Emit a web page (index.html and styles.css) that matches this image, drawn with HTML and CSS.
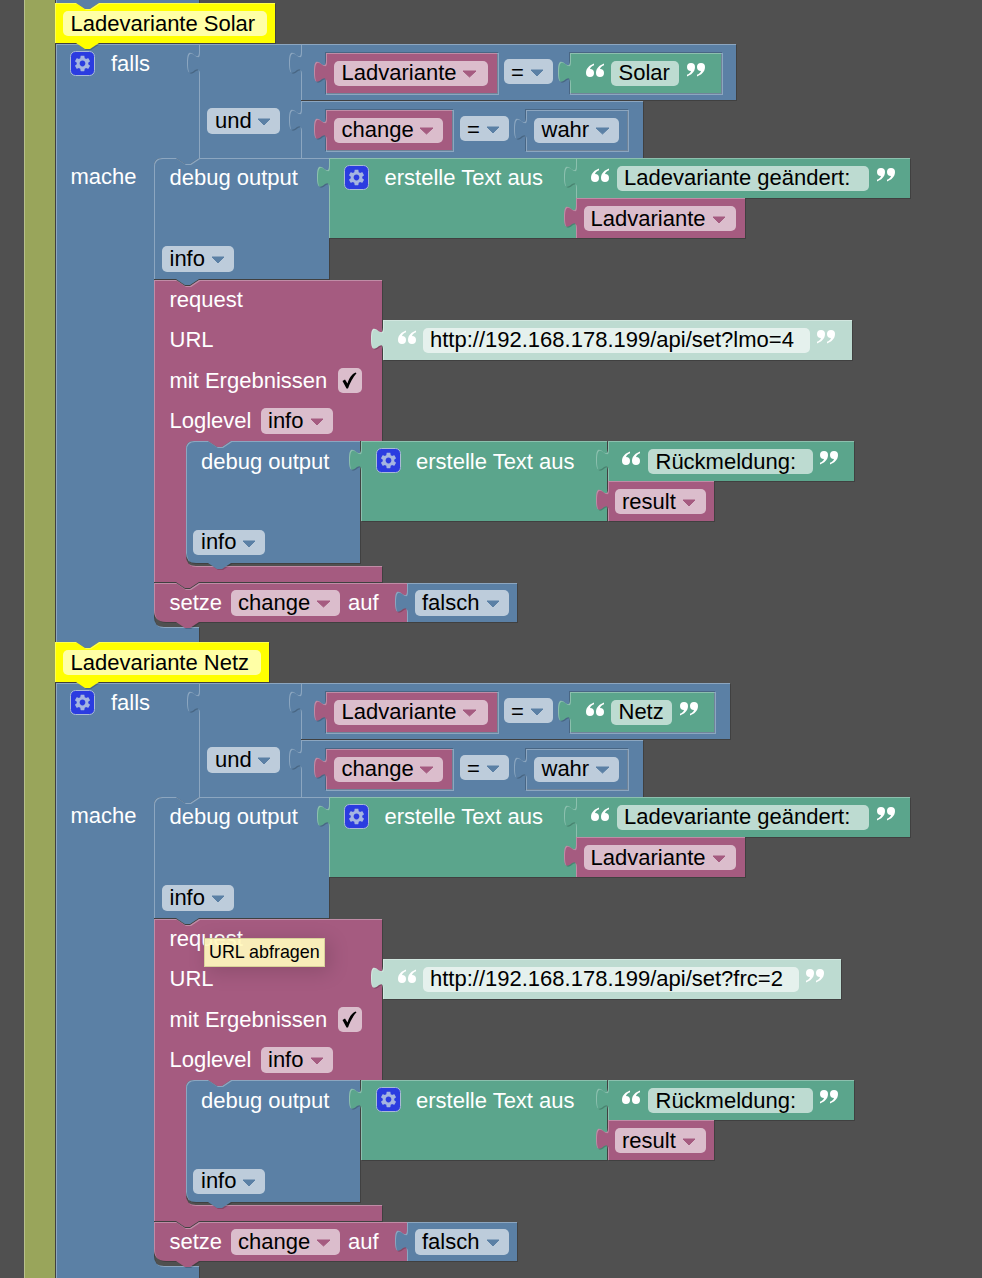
FILE: index.html
```html
<!DOCTYPE html>
<html lang="de">
<head>
    <meta charset="UTF-8">
    <title>Ladevariante</title>
    <link rel="stylesheet" href="styles.css">
</head>
<body>
<div class="workspace">
<svg class="canvas" width="982" height="1278" viewBox="0 0 982 1278">
    <defs>
        <filter id="bevel" x="-5%" y="-5%" width="110%" height="110%" color-interpolation-filters="sRGB">
            <feOffset in="SourceAlpha" dx="1" dy="1" result="off"/>
            <feComposite in="SourceAlpha" in2="off" operator="out" result="edge"/>
            <feFlood flood-color="#fff" flood-opacity=".3"/>
            <feComposite in2="edge" operator="in" result="light"/>
            <feFlood flood-color="#000" flood-opacity=".2"/>
            <feComposite in2="off" operator="in" result="dark"/>
            <feMerge>
                <feMergeNode in="dark"/>
                <feMergeNode in="SourceGraphic"/>
                <feMergeNode in="light"/>
            </feMerge>
        </filter>

        <symbol id="gear" viewBox="0 0 25 25">
            <rect class="gear-box" x=".5" y=".5" width="24" height="24" rx="5"/>
            <path class="gear-wheel" transform="translate(2.9 2.9) scale(.8)" d="M19.14 12.94c.04-.3.06-.61.06-.94 0-.32-.02-.64-.07-.94l2.03-1.58c.18-.14.23-.41.12-.61l-1.92-3.32c-.12-.22-.37-.29-.59-.22l-2.39.96c-.5-.38-1.03-.7-1.62-.94l-.36-2.54c-.04-.24-.24-.41-.48-.41h-3.84c-.24 0-.43.17-.47.41l-.36 2.54c-.59.24-1.13.57-1.62.94l-2.39-.96c-.22-.08-.47 0-.59.22L2.74 8.87c-.12.21-.08.47.12.61l2.03 1.58c-.05.3-.09.63-.09.94s.02.64.07.94l-2.03 1.58c-.18.14-.23.41-.12.61l1.92 3.32c.12.22.37.29.59.22l2.39-.96c.5.38 1.03.7 1.62.94l.36 2.54c.05.24.24.41.48.41h3.84c.24 0 .44-.17.47-.41l.36-2.54c.59-.24 1.13-.56 1.62-.94l2.39.96c.22.08.47 0 .59-.22l1.92-3.32c.12-.22.07-.47-.12-.61l-2.01-1.58zM12 15.6c-1.98 0-3.6-1.62-3.6-3.6s1.62-3.6 3.6-3.6 3.6 1.62 3.6 3.6-1.62 3.6-3.6 3.6z"/>
        </symbol>
        <symbol id="quote-open" viewBox="0 0 18 14">
            <path class="quote" d="M8 .5C4 2 0 5 0 10a4 4 0 1 0 4-4C4.300 4.500 5.500 3.300 8 2.300zM18 .5C14 2 10 5 10 10a4 4 0 1 0 4-4C14.300 4.500 15.500 3.300 18 2.300z"/>
        </symbol>
        <symbol id="quote-close" viewBox="0 0 18 14">
            <path class="quote" transform="rotate(180 9 7)" d="M8 .5C4 2 0 5 0 10a4 4 0 1 0 4-4C4.300 4.500 5.500 3.300 8 2.300zM18 .5C14 2 10 5 10 10a4 4 0 1 0 4-4C14.300 4.500 15.500 3.300 18 2.300z"/>
        </symbol>

        <!-- falls / und, liegen unter allem anderen -->
        <g id="base">
            <path class="blk blue" d="M56 44H199V158H199l-9 6h-5l-9-6H162Q154 158 154 166V617Q154 627 164 627H199V642H99l-9 6h-5l-9-6H56z"/>
            <path class="blk blue" d="M199 44H301V158H199V74c0-15-12 12-12-11.250s12 3.750 12-11.250z"/>
        </g>

        <!-- alle Bloecke die in beiden Stapeln gleich sind -->
        <g id="blocks">
            <rect class="slot slot-blue" x="326" y="53" width="173" height="42"/>
            <path class="blk purple" d="M326 53H497V93H326V83c0-15-12 12-12-11.250s12 3.750 12-11.250z"/>
            <rect class="field f-purple" x="334" y="61" width="154" height="25" rx="5"/>
            <path class="arrow a-purple" d="M463 71h13l-6.500 6z"/>
            <rect class="field f-blue" x="504" y="59" width="49" height="25" rx="5"/>
            <path class="arrow a-blue" d="M531 70h12l-6 6z"/>

            <path class="blk blue" d="M301 101H643V158H301V131c0-15-12 12-12-11.250s12 3.750 12-11.250z"/>
            <rect class="slot slot-blue" x="326" y="110" width="128" height="42"/>
            <path class="blk purple" d="M326 110H452V150H326V140c0-15-12 12-12-11.250s12 3.750 12-11.250z"/>
            <rect class="field f-purple" x="334" y="118" width="109" height="25" rx="5"/>
            <path class="arrow a-purple" d="M420 128h13l-6.500 6z"/>
            <rect class="field f-blue" x="460" y="116" width="49" height="25" rx="5"/>
            <path class="arrow a-blue" d="M487 127h12l-6 6z"/>
            <rect class="slot slot-blue" x="526" y="110" width="103" height="42"/>
            <path class="blk blue" d="M526 110H627V150H526V140c0-15-12 12-12-11.250s12 3.750 12-11.250z"/>
            <rect class="field f-blue" x="534" y="118" width="85" height="25" rx="5"/>
            <path class="arrow a-blue" d="M596 128h13l-6.500 6z"/>

            <rect class="field f-blue" x="207" y="108" width="73" height="26" rx="5"/>
            <path class="arrow a-blue" d="M258 119h12l-6 6z"/>
            <use href="#gear" x="70" y="51" width="25" height="25"/>

            <path class="blk blue" d="M162 158H176l9 6h5l9-6H329V279H199l-9 6h-5l-9-6H154V166Q154 158 162 158z"/>
            <rect class="field f-blue" x="162" y="246" width="72" height="26" rx="5"/>
            <path class="arrow a-blue" d="M212 257h12l-6 6z"/>
            <path class="blk green" d="M329 158H576V238H329V188c0-15-12 12-12-11.250s12 3.750 12-11.250z"/>
            <use href="#gear" x="344" y="165" width="25" height="25"/>
            <path class="blk green" d="M576 158H910V198H576V188c0-15-12 12-12-11.250s12 3.750 12-11.250z"/>
            <use href="#quote-open" x="591" y="168" width="18" height="14"/>
            <rect class="field f-green" x="617" y="166" width="252" height="25" rx="5"/>
            <use href="#quote-close" x="877" y="168" width="18" height="14"/>
            <path class="blk purple" d="M576 198H745V238H576V228c0-15-12 12-12-11.250s12 3.750 12-11.250z"/>
            <rect class="field f-purple" x="584" y="206" width="152" height="25" rx="5"/>
            <path class="arrow a-purple" d="M713 217h12l-6 6z"/>

            <path class="blk purple" d="M154 280H176l9 6h5l9-6H382V441H231l-9 6h-5l-9-6H194Q186 441 186 449V556Q186 566 196 566H382V582H199l-9 6h-5l-9-6H154z"/>
            <rect class="field f-purple" x="338" y="368" width="24" height="25" rx="5"/>
            <path class="check" d="M342.500 381l2.500-1.500 2.500 4C349 378 352 374 355.500 372.500l1 .8C353 377 350 383 348 388.500h-1.500z"/>
            <rect class="field f-purple" x="261" y="408" width="72" height="26" rx="5"/>
            <path class="arrow a-purple" d="M311 419h12l-6 6z"/>

            <path class="blk blue" d="M194 441H208l9 6h5l9-6H360V563H231l-9 6h-5l-9-6H196Q186 563 186 553V449Q186 441 194 441z"/>
            <rect class="field f-blue" x="193" y="530" width="72" height="25" rx="5"/>
            <path class="arrow a-blue" d="M243 541h12l-6 6z"/>
            <path class="blk green" d="M361 441H607V521H361V471c0-15-12 12-12-11.250s12 3.750 12-11.250z"/>
            <use href="#gear" x="376" y="448" width="25" height="25"/>
            <path class="blk green" d="M608 441H854V481H608V471c0-15-12 12-12-11.250s12 3.750 12-11.250z"/>
            <use href="#quote-open" x="622" y="451" width="18" height="14"/>
            <rect class="field f-green" x="648" y="449" width="165" height="25" rx="5"/>
            <use href="#quote-close" x="820" y="451" width="18" height="14"/>
            <path class="blk purple" d="M608 481H714V521H608V511c0-15-12 12-12-11.250s12 3.750 12-11.250z"/>
            <rect class="field f-purple" x="615" y="489" width="91" height="25" rx="5"/>
            <path class="arrow a-purple" d="M683 500h12l-6 6z"/>

            <path class="blk purple" d="M154 583H176l9 6h5l9-6H407V622H199l-9 6h-5l-9-6H166Q154 622 154 610z"/>
            <rect class="field f-purple" x="231" y="590" width="109" height="26" rx="5"/>
            <path class="arrow a-purple" d="M317 601h13l-6.500 6z"/>
            <path class="blk blue" d="M407 583H517V622H407V613c0-15-12 12-12-11.250s12 3.750 12-11.250z"/>
            <rect class="field f-blue" x="415" y="590" width="94" height="26" rx="5"/>
            <path class="arrow a-blue" d="M487 601h12l-6 6z"/>
        </g>
    </defs>

    <!-- Trigger aussen links -->
    <path class="blk olive" d="M24 -10H55V1288H24z"/>
    <path class="blk blue" d="M56 -10H199V3H99l-9 6h-5l-9-6H56z"/>

    <!-- Ladevariante Solar -->
    <g class="stack">
        <use href="#base"/>
        <path class="blk blue" d="M301 44H736V100H301V74c0-15-12 12-12-11.250s12 3.750 12-11.250z"/>
        <rect class="slot slot-blue" x="570" y="53" width="153" height="42"/>
        <path class="blk green" d="M570 53H721V93H570V83c0-15-12 12-12-11.250s12 3.750 12-11.250z"/>
        <use href="#quote-open" x="586" y="63" width="18" height="14"/>
        <rect class="field f-green" x="611" y="61" width="68" height="25" rx="5"/>
        <use href="#quote-close" x="687" y="63" width="18" height="14"/>
        <use href="#blocks"/>
        <path class="blk mint" d="M383 320H852V360H383V350c0-15-12 12-12-11.250s12 3.750 12-11.250z"/>
        <use href="#quote-open" x="398" y="330" width="18" height="14"/>
        <rect class="field f-mint" x="423" y="328" width="387" height="25" rx="5"/>
        <use href="#quote-close" x="817" y="330" width="18" height="14"/>
        <path class="blk yellow" d="M55 3H76l9 6h5l9-6H275V43H99l-9 6h-5l-9-6H55z"/>
        <rect class="field f-yellow" x="63" y="11" width="204" height="25" rx="5"/>

        <text class="label dark" x="70.500" y="31">Ladevariante Solar</text>
        <text class="label" x="111" y="71">falls</text>
        <text class="label dark" x="341.500" y="80">Ladvariante</text>
        <text class="label dark" x="511" y="80">=</text>
        <text class="label dark" x="618.500" y="80">Solar</text>
        <text class="label dark" x="215" y="128">und</text>
        <text class="label dark" x="341.500" y="137">change</text>
        <text class="label dark" x="467" y="137">=</text>
        <text class="label dark" x="541.500" y="137">wahr</text>
        <text class="label" x="70.500" y="184">mache</text>
        <text class="label" x="169.500" y="185">debug output</text>
        <text class="label" x="384.500" y="185">erstelle Text aus</text>
        <text class="label dark" x="624" y="185">Ladevariante geändert:</text>
        <text class="label dark" x="590.500" y="226">Ladvariante</text>
        <text class="label dark" x="169.500" y="266">info</text>
        <text class="label" x="169.500" y="307">request</text>
        <text class="label" x="169.500" y="347">URL</text>
        <text class="label dark" x="430" y="347">http://192.168.178.199/api/set?lmo=4</text>
        <text class="label" x="169.500" y="388">mit Ergebnissen</text>
        <text class="label" x="169.500" y="428">Loglevel</text>
        <text class="label dark" x="268" y="428">info</text>
        <text class="label" x="201" y="469">debug output</text>
        <text class="label" x="416" y="469">erstelle Text aus</text>
        <text class="label dark" x="655.500" y="469">Rückmeldung:</text>
        <text class="label dark" x="622" y="509">result</text>
        <text class="label dark" x="201" y="549">info</text>
        <text class="label" x="169.500" y="610">setze</text>
        <text class="label dark" x="238" y="610">change</text>
        <text class="label" x="348" y="610">auf</text>
        <text class="label dark" x="422" y="610">falsch</text>
    </g>

    <!-- Ladevariante Netz -->
    <g class="stack stack-netz">
        <use href="#base"/>
        <path class="blk blue" d="M301 44H730V100H301V74c0-15-12 12-12-11.250s12 3.750 12-11.250z"/>
        <rect class="slot slot-blue" x="570" y="53" width="146" height="42"/>
        <path class="blk green" d="M570 53H714V93H570V83c0-15-12 12-12-11.250s12 3.750 12-11.250z"/>
        <use href="#quote-open" x="586" y="63" width="18" height="14"/>
        <rect class="field f-green" x="611" y="61" width="61" height="25" rx="5"/>
        <use href="#quote-close" x="680" y="63" width="18" height="14"/>
        <use href="#blocks"/>
        <path class="blk mint" d="M383 320H841V360H383V350c0-15-12 12-12-11.250s12 3.750 12-11.250z"/>
        <use href="#quote-open" x="398" y="330" width="18" height="14"/>
        <rect class="field f-mint" x="423" y="328" width="376" height="25" rx="5"/>
        <use href="#quote-close" x="806" y="330" width="18" height="14"/>
        <path class="blk yellow" d="M55 3H76l9 6h5l9-6H269V43H99l-9 6h-5l-9-6H55z"/>
        <rect class="field f-yellow" x="63" y="11" width="198" height="25" rx="5"/>

        <text class="label dark" x="70.500" y="31">Ladevariante Netz</text>
        <text class="label" x="111" y="71">falls</text>
        <text class="label dark" x="341.500" y="80">Ladvariante</text>
        <text class="label dark" x="511" y="80">=</text>
        <text class="label dark" x="618.500" y="80">Netz</text>
        <text class="label dark" x="215" y="128">und</text>
        <text class="label dark" x="341.500" y="137">change</text>
        <text class="label dark" x="467" y="137">=</text>
        <text class="label dark" x="541.500" y="137">wahr</text>
        <text class="label" x="70.500" y="184">mache</text>
        <text class="label" x="169.500" y="185">debug output</text>
        <text class="label" x="384.500" y="185">erstelle Text aus</text>
        <text class="label dark" x="624" y="185">Ladevariante geändert:</text>
        <text class="label dark" x="590.500" y="226">Ladvariante</text>
        <text class="label dark" x="169.500" y="266">info</text>
        <text class="label" x="169.500" y="307">request</text>
        <text class="label" x="169.500" y="347">URL</text>
        <text class="label dark" x="430" y="347">http://192.168.178.199/api/set?frc=2</text>
        <text class="label" x="169.500" y="388">mit Ergebnissen</text>
        <text class="label" x="169.500" y="428">Loglevel</text>
        <text class="label dark" x="268" y="428">info</text>
        <text class="label" x="201" y="469">debug output</text>
        <text class="label" x="416" y="469">erstelle Text aus</text>
        <text class="label dark" x="655.500" y="469">Rückmeldung:</text>
        <text class="label dark" x="622" y="509">result</text>
        <text class="label dark" x="201" y="549">info</text>
        <text class="label" x="169.500" y="610">setze</text>
        <text class="label dark" x="238" y="610">change</text>
        <text class="label" x="348" y="610">auf</text>
        <text class="label dark" x="422" y="610">falsch</text>
    </g>
</svg>
<div class="tooltip">URL abfragen</div>
</div>
</body>
</html>
```

FILE: styles.css
```css
body {
    margin: 0;
    background: #505050;
    overflow: hidden;
}

.workspace {
    position: relative;
    width: 982px;
    height: 1278px;
    overflow: hidden;
}

.canvas {
    display: block;
}

.stack-netz {
    transform: translateY(639px);
}

/* bloecke */
.blk {
    filter: url(#bevel);
}

.blue { fill: #5b80a5; }
.purple { fill: #a55b80; }
.green { fill: #5ba58c; }
.olive { fill: #99a55b; }
.yellow { fill: #ffff00; }
.mint { fill: #bddbd1; }

.slot {
    filter: drop-shadow(-1px -1px 0 #496684);
}

.slot-blue { fill: #8ca6c0; }

/* felder */
.f-blue { fill: #bdccdb; }
.f-purple { fill: #dbbdcc; }
.f-green { fill: #bddbd1; }
.f-mint { fill: #e5f1ed; }
.f-yellow { fill: #ffffa6; }

.arrow {
    stroke-width: 1;
    stroke-linejoin: round;
}

.a-blue { fill: #5b80a5; stroke: #5b80a5; }
.a-purple { fill: #a55b80; stroke: #a55b80; }

.label {
    font-family: "Liberation Sans", Arial, sans-serif;
    font-size: 22px;
    fill: #fff;
}

.label.dark {
    fill: #000;
}

.check { fill: #000; }
.quote { fill: #fff; }

.gear-box {
    fill: #2b3ce0;
    stroke: #a9bad6;
    stroke-width: 1;
}

.gear-wheel { fill: #a5b5e0; }

.tooltip {
    position: absolute;
    left: 204px;
    top: 938px;
    padding: 1px 4px 2px;
    font-family: "Liberation Sans", Arial, sans-serif;
    font-size: 17.9px;
    line-height: 24px;
    color: #000;
    background: rgba(255, 250, 190, 0.92);
    border: 1px solid #d8d29a;
    box-shadow: 4px 4px 20px 1px rgba(0, 0, 0, 0.15);
}
```
